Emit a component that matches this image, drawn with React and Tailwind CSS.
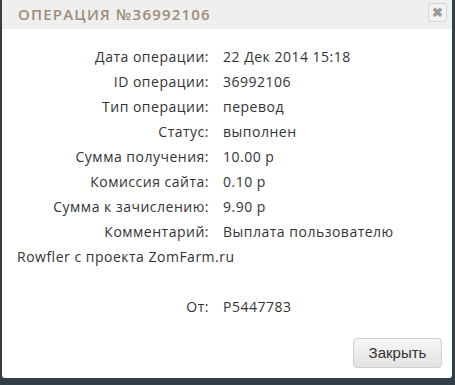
export default function App() {
  const rows = [
    ["Дата операции:", "22 Дек 2014 15:18"],
    ["ID операции:", "36992106"],
    ["Тип операции:", "перевод"],
    ["Статус:", "выполнен"],
    ["Сумма получения:", "10.00 р"],
    ["Комиссия сайта:", "0.10 р"],
    ["Сумма к зачислению:", "9.90 р"],
  ];

  return (
    <div className="w-[455px] h-[385px] bg-[#333f48] pl-[2px] pr-[3px] pb-[7px] overflow-hidden">
      <div className="w-[450px] h-[378px] bg-white rounded-b-[3px] flex flex-col font-['Open_Sans',sans-serif] text-[#333]">
        {/* HEADER */}
        <div className="h-[29px] bg-[#efefef] flex items-center justify-between pl-4 pr-[5px]">
          <h3 className="text-[15px] tracking-[1.2px] text-[#a08c77] font-semibold uppercase">
            Операция №36992106
          </h3>
          <button className="w-[19px] h-[19px] mb-[4px] border border-[#d6d6d6] rounded-[3px] bg-[#f2f2f2] flex items-center justify-center text-[#999] text-[13px] font-bold leading-none">
            ✖
          </button>
        </div>

        {/* BODY */}
        <div className="flex-1 pt-[15px] pl-[15px] pr-[30px] text-[14px] leading-[25px] tracking-[0.5px]">
          {rows.map(([label, value]) => (
            <div key={label}>
              <span className="inline-block w-[206px] text-right pr-[14px]">{label}</span>
              {value}
            </div>
          ))}
          <div>
            <span className="inline-block w-[206px] text-right pr-[14px]">Комментарий:</span>
            Выплата пользователю Rowfler с проекта ZomFarm.ru
          </div>
          <div className="h-[25px]" />
          <div>
            <span className="inline-block w-[206px] text-right pr-[14px]">От:</span>
            P5447783
          </div>
        </div>

        {/* FOOTER */}
        <div className="flex justify-end pr-[10px] pb-[10px]">
          <button className="h-[30px] w-[89px] rounded-[4px] border border-[#cfcfcf] bg-gradient-to-b from-[#f6f6f6] to-[#e2e2e2] text-[#333] text-[15px] font-['Liberation_Sans',sans-serif]">
            Закрыть
          </button>
        </div>
      </div>
    </div>
  );
}
